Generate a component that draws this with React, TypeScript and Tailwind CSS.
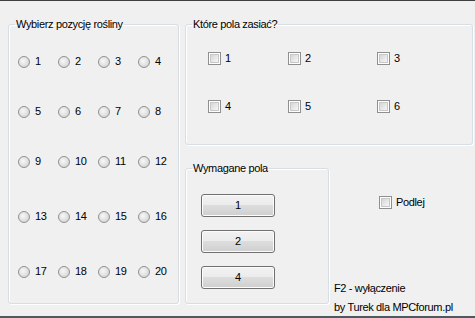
import React from "react";

const font = { fontFamily: '"Liberation Sans", Arial, sans-serif' };
const txt = "text-[11px] leading-[13px] tracking-[-0.35px] text-black";

function Radio({ label }: { label: string }) {
  return (
    <div className="flex items-center w-[40px] gap-[5px] h-[13px]">
      <span className="w-[12px] h-[12px] rounded-full border border-[#929292] bg-[radial-gradient(circle_at_40%_40%,#f8f8f8_0%,#e4e4e4_45%,#c9c9c9_100%)] shrink-0" />
      <span className={txt}>{label}</span>
    </div>
  );
}

function Check({ label, w }: { label: string; w?: string }) {
  return (
    <div className={`flex items-center gap-[4px] h-[13px] ${w ?? ""}`}>
      <span className="w-[13px] h-[13px] border border-[#8e8f8f] bg-white p-[1px] shrink-0">
        <span className="block w-full h-full bg-gradient-to-br from-[#d6d6d6] to-[#f6f6f6] border border-[#c8c8c8]" />
      </span>
      <span className={txt}>{label}</span>
    </div>
  );
}

function Btn({ label }: { label: string }) {
  return (
    <button className={`w-[74px] h-[23px] rounded-[3px] border border-[#707070] bg-[linear-gradient(#f2f2f2_0%,#ebebeb_50%,#dddddd_50%,#cfcfcf_100%)] shadow-[inset_0_0_0_1px_#fcfcfc] flex items-center justify-center ${txt}`}>
      {label}
    </button>
  );
}

function Legend({ children }: { children: React.ReactNode }) {
  return <legend className={`ml-[6px] px-[1px] ${txt}`}>{children}</legend>;
}

const box =
  "border border-[#d5dfe5] rounded-[3px] shadow-[inset_1px_1px_0_#ffffff,1px_1px_0_#ffffff]";

const rows = [
  ["1", "2", "3", "4"],
  ["5", "6", "7", "8"],
  ["9", "10", "11", "12"],
  ["13", "14", "15", "16"],
  ["17", "18", "19", "20"],
];
const rowMt = ["mt-[24px]", "mt-[37px]", "mt-[37px]", "mt-[42px]", "mt-[42px]"];

export default function App() {
  return (
    <div
      style={font}
      className="w-[475px] h-[318px] bg-[#f0f0f0] border-t border-t-[#3f3f3f] border-b-2 border-b-[#4b5961] flex overflow-hidden"
    >
      <fieldset className={`ml-[8px] mt-[17px] w-[170px] h-[286px] ${box}`}>
        <Legend>Wybierz pozycję rośliny</Legend>
        <div className="pl-[9px]">
          {rows.map((r, i) => (
            <div key={i} className={`flex ${rowMt[i]}`}>
              {r.map((l) => (
                <Radio key={l} label={l} />
              ))}
            </div>
          ))}
        </div>
      </fieldset>

      <div className="ml-[6px] mt-[17px] flex flex-col">
        <fieldset className={`w-[288px] h-[127px] ${box}`}>
          <Legend>Które pola zasiać?</Legend>
          <div className="pl-[22px]">
            <div className="flex mt-[21px]">
              <Check label="1" w="w-[80px]" />
              <Check label="2" w="w-[89px]" />
              <Check label="3" />
            </div>
            <div className="flex mt-[35px]">
              <Check label="4" w="w-[80px]" />
              <Check label="5" w="w-[89px]" />
              <Check label="6" />
            </div>
          </div>
        </fieldset>

        <div className="flex mt-[17px]">
          <fieldset className={`w-[144px] h-[142px] ${box}`}>
            <Legend>Wymagane pola</Legend>
            <div className="pl-[15px] flex flex-col gap-[13px] mt-[19px]">
              <Btn label="1" />
              <Btn label="2" />
              <Btn label="4" />
            </div>
          </fieldset>
          <div className="ml-[5px] flex flex-col">
            <div className="mt-[34px] pl-[45px]">
              <Check label="Podlej" />
            </div>
            <div className={`mt-[73px] whitespace-nowrap ${txt}`}>F2 - wyłączenie</div>
            <div className={`mt-[6px] whitespace-nowrap ${txt}`}>by Turek dla MPCforum.pl</div>
          </div>
        </div>
      </div>
    </div>
  );
}
